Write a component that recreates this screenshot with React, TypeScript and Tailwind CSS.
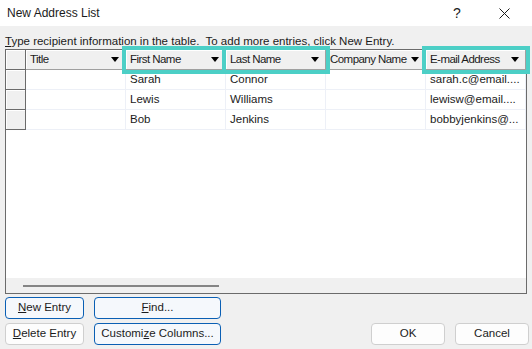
import React from "react";

const columns = [
  { label: "Title", hi: false },
  { label: "First Name", hi: true },
  { label: "Last Name", hi: true },
  { label: "Company Name", hi: false },
  { label: "E-mail Address", hi: true },
];

const rows = [
  ["", "Sarah", "Connor", "", "sarah.c@email...."],
  ["", "Lewis", "Williams", "", "lewisw@email...."],
  ["", "Bob", "Jenkins", "", "bobbyjenkins@..."],
];

const Btn: React.FC<{ className: string; primary?: boolean; children: React.ReactNode }> = ({
  className,
  primary,
  children,
}) => (
  <button
    className={`h-[22px] rounded-[4px] border text-[11.5px] text-[#1b1b1b] flex items-center justify-center ${
      primary ? "border-[#0a5fb4] bg-[#f5f8fc]" : "border-[#cfcfcf] bg-[#fdfdfd]"
    } ${className}`}
  >
    {children}
  </button>
);

export default function App() {
  return (
    <div className="w-[532px] h-[349px] bg-[#f0f0f0] flex flex-col font-['Liberation_Sans',Arial,sans-serif] text-[#1b1b1b] overflow-hidden">
      {/* Title bar */}
      <div className="h-[26px] bg-white flex items-center pl-[7px] shrink-0">
        <span className="text-[12px]">New Address List</span>
        <div className="ml-auto flex items-center">
          <span className="text-[14px] w-[10px] mr-[36px]">?</span>
          <svg width="11" height="11" viewBox="0 0 11 11" className="mr-[22px]">
            <path d="M0.5 0.5L10.5 10.5M10.5 0.5L0.5 10.5" stroke="#1b1b1b" strokeWidth="1" />
          </svg>
        </div>
      </div>

      <div className="px-[5px] flex flex-col">
        {/* Instruction */}
        <div className="mt-[8px] h-[15px] text-[11.5px] leading-[15px] whitespace-pre">
          <span className="underline">T</span>ype recipient information in the table.  To add more entries, click New Entry.
        </div>

        {/* Table */}
        <div className="h-[245px] border border-[#6b6b6b] bg-white flex flex-col">
          <div className="grid grid-cols-[20px_repeat(5,100px)_1fr]">
            {/* Header row */}
            <div className="h-[20px] bg-[#f0f0f0] border-r border-b border-[#6b6b6b] shadow-[inset_1px_1px_0_#fff]" />
            {columns.map((c) => (
              <div
                key={c.label}
                className={`h-[20px] bg-[#f0f0f0] border-r border-b border-[#a0a0a0] shadow-[inset_1px_1px_0_#fff] flex items-center pl-[4px] pr-[6px] ${
                  c.hi ? "relative z-10 outline-4 outline-[#4ccfc6]" : ""
                }`}
              >
                <span className="text-[11.5px] tracking-[-0.55px] whitespace-nowrap">{c.label}</span>
                <span className="ml-auto w-0 h-0 border-l-[4px] border-r-[4px] border-t-[5px] border-l-transparent border-r-transparent border-t-black" />
              </div>
            ))}
            <div className="h-[20px] bg-white" />

            {/* Data rows */}
            {rows.map((r, i) => (
              <React.Fragment key={i}>
                <div className="h-[20px] bg-[#f0f0f0] border-r border-b border-[#6b6b6b] shadow-[inset_1px_1px_0_#fff]" />
                {r.map((v, j) => (
                  <div
                    key={j}
                    className="h-[20px] border-r border-b border-[#edf0f7] pl-[4px] text-[11.5px] leading-[19px] whitespace-nowrap overflow-hidden"
                  >
                    {v}
                  </div>
                ))}
                <div className="h-[20px] bg-white" />
              </React.Fragment>
            ))}
          </div>

          <div className="flex-1 bg-white" />

          {/* Horizontal scrollbar */}
          <div className="h-[15px] bg-[#f0f0f0] pl-[17px] pt-[7px]">
            <div className="w-[196px] h-[2px] bg-[#858585]" />
          </div>
        </div>

        {/* Buttons */}
        <div className="mt-[3px] flex gap-[10px]">
          <Btn primary className="w-[79px]">
            <span className="underline">N</span>ew Entry
          </Btn>
          <Btn primary className="w-[127px]">
            <span className="underline">F</span>ind...
          </Btn>
        </div>
        <div className="mt-[4px] flex gap-[10px] -mr-[2px]">
          <Btn className="w-[79px]">
            <span className="underline">D</span>elete Entry
          </Btn>
          <Btn primary className="w-[127px]">
            Customi<span className="underline">z</span>e Columns...
          </Btn>
          <Btn className="w-[74px] ml-auto">OK</Btn>
          <Btn className="w-[74px]">Cancel</Btn>
        </div>
      </div>
    </div>
  );
}
